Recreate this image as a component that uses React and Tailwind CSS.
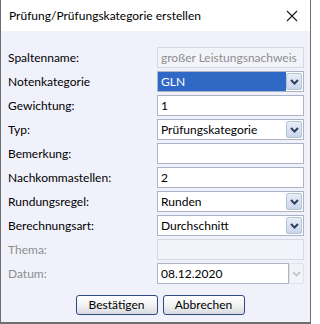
import React from 'react'

const font = { fontFamily: 'Lato, "Noto Sans", sans-serif' }

function Chevron({ disabled }) {
  return (
    <svg width="9" height="6" viewBox="0 0 9 6" className="block">
      <path
        d="M1 1 L4.5 4.5 L8 1"
        fill="none"
        stroke={disabled ? '#c3c8d2' : '#2d3f63'}
        strokeWidth="2"
      />
    </svg>
  )
}

function ArrowButton({ disabled }) {
  return (
    <div
      className={
        disabled
          ? 'w-[15px] h-full flex items-center justify-center border border-[#dfe2ea] rounded-[2px] bg-[#f3f4f9]'
          : 'w-[16px] h-[17px] mr-[1px] flex items-center justify-center border border-[#b5c3d9] rounded-[2px] bg-gradient-to-b from-[#e9eef7] to-[#c9d5ea]'
      }
    >
      <Chevron disabled={disabled} />
    </div>
  )
}

function TextBox({ value = '', disabled }) {
  return (
    <div
      className={
        'w-[147px] h-[21px] flex items-center px-[3px] border text-[12px] whitespace-nowrap overflow-hidden ' +
        (disabled
          ? 'border-[#d6d9e3] bg-[#f3f3fb] text-[#8e8e8e]'
          : 'border-[#abb4c4] bg-white text-black')
      }
    >
      {value}
    </div>
  )
}

function ComboBox({ value, selected }) {
  return (
    <div className="w-[147px] h-[21px] flex items-center border border-[#abb4c4] bg-white text-[12px] whitespace-nowrap">
      <div
        className={
          'flex-1 h-full flex items-center px-[3px] ' +
          (selected ? 'bg-[#3069c5] text-white' : 'text-black')
        }
      >
        {value}
      </div>
      <ArrowButton />
    </div>
  )
}

function DateBox({ value }) {
  return (
    <div className="w-[147px] h-[21px] flex items-stretch text-[12px]">
      <div className="flex-1 flex items-center px-[3px] border border-[#abb4c4] bg-white text-black">
        {value}
      </div>
      <ArrowButton disabled />
    </div>
  )
}

function Row({ label, disabled, children }) {
  return (
    <div className="h-[21px] flex items-center justify-between">
      <span className={'text-[12px] ' + (disabled ? 'text-[#8d8d8d]' : 'text-black')}>{label}</span>
      {children}
    </div>
  )
}

function Button({ children }) {
  return (
    <button
      type="button"
      className="h-[20px] w-[82px] rounded-[3px] border border-[#2c4a7e] bg-gradient-to-b from-white via-[#f2f2f2] to-[#d9dbe2] text-[12px] text-black leading-none"
    >
      {children}
    </button>
  )
}

export default function App() {
  return (
    <div
      className="w-[311px] h-[324px] flex flex-col border-x border-b-2 border-[#6e6e6e] bg-[#f1f1fc] overflow-hidden"
      style={font}
    >
      <div className="h-[31px] bg-white flex items-center justify-between pl-[8px] pr-[12px]">
        <span className="text-[12px] text-black">Prüfung/Prüfungskategorie erstellen</span>
        <svg width="12" height="12" viewBox="0 0 12 12">
          <path d="M1 1 L11 11 M11 1 L1 11" stroke="#1a1a1a" strokeWidth="1.1" />
        </svg>
      </div>

      <div className="flex flex-col gap-[3px] pt-[16px] pl-[7px] pr-[6px]">
        <Row label="Spaltenname:">
          <TextBox value="großer Leistungsnachweis" disabled />
        </Row>
        <Row label="Notenkategorie">
          <ComboBox value="GLN" selected />
        </Row>
        <Row label="Gewichtung:">
          <TextBox value="1" />
        </Row>
        <Row label="Typ:">
          <ComboBox value="Prüfungskategorie" />
        </Row>
        <Row label="Bemerkung:">
          <TextBox />
        </Row>
        <Row label="Nachkommastellen:">
          <TextBox value="2" />
        </Row>
        <Row label="Rundungsregel:">
          <ComboBox value="Runden" />
        </Row>
        <Row label="Berechnungsart:">
          <ComboBox value="Durchschnitt" />
        </Row>
        <Row label="Thema:" disabled>
          <TextBox disabled />
        </Row>
        <Row label="Datum:" disabled>
          <DateBox value="08.12.2020" />
        </Row>
      </div>

      <div className="flex justify-center gap-[5px] mt-[11px] pl-[9px]">
        <Button>Bestätigen</Button>
        <Button>Abbrechen</Button>
      </div>
    </div>
  )
}
